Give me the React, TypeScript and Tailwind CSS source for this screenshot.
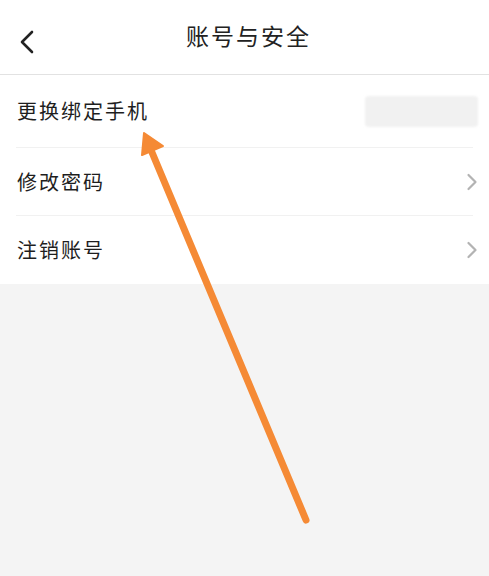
const font = { fontFamily: '"Noto Sans CJK SC", "Noto Sans", sans-serif' }

const rows = [
  { label: '更换绑定手机', phone: true, h: 'h-[72px]' },
  { label: '修改密码', phone: false, h: 'h-[67px]' },
  { label: '注销账号', phone: false, h: 'h-[68px]' },
]

export default function App() {
  return (
    <div className="relative w-[489px] h-[576px] overflow-hidden bg-[#f4f4f4]" style={font}>
      {/* Header */}
      <div className="relative h-[75px] bg-white border-b border-[#e2e2e2] flex items-center justify-center">
        <svg className="absolute left-[18px] top-[30px]" width="18" height="24" viewBox="0 0 18 24" fill="none">
          <path d="M14 2 L4 12 L14 22" stroke="#222" strokeWidth="2.6" strokeLinecap="round" strokeLinejoin="round" />
        </svg>
        <h1 className="text-[23px] tracking-[2px] text-[#222] pl-2 pb-1">账号与安全</h1>
      </div>

      {/* Settings list */}
      <div className="bg-white">
        {rows.map((row, i) => (
          <div key={row.label}>
            {i > 0 && <div className="mx-4 h-px bg-[#f1f1f1]" />}
            <div className={`${row.h} flex items-center justify-between pl-[17px] pr-[6px]`}>
              <span className="text-[20px] tracking-[2px] text-[#1e1e1e]">{row.label}</span>
              {row.phone ? (
                <div className="w-[113px] h-[31px] mr-[5px] bg-[#f1f1f1] rounded-sm blur-[1px]" />
              ) : (
                <svg className="mr-[5px]" width="12" height="18" viewBox="0 0 12 18" fill="none">
                  <path d="M2.5 2 L9.5 9 L2.5 16" stroke="#b3b3b3" strokeWidth="2.2" strokeLinecap="round" strokeLinejoin="round" />
                </svg>
              )}
            </div>
          </div>
        ))}
      </div>

      {/* Annotation arrow */}
      <svg className="absolute left-0 top-0 pointer-events-none" width="489" height="576" viewBox="0 0 489 576">
        <line x1="306" y1="520" x2="151" y2="150" stroke="#f58a35" strokeWidth="7" strokeLinecap="round" />
        <polygon points="144,133 163,146 142,155" fill="#f58a35" stroke="#f58a35" strokeWidth="2" strokeLinejoin="round" />
      </svg>
    </div>
  )
}
